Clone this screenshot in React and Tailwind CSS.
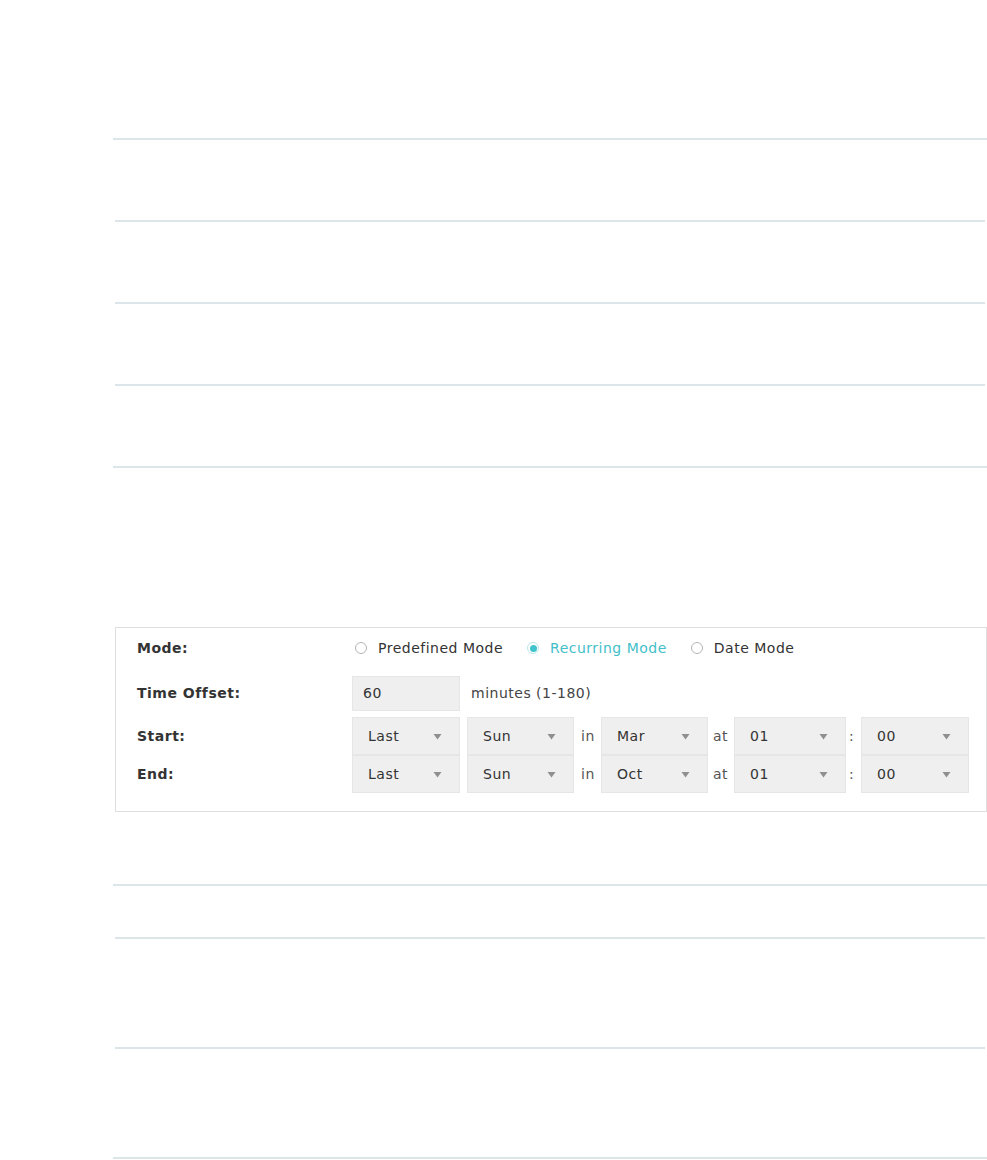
const font = { fontFamily: '"DejaVu Sans", Verdana, sans-serif' };

function Rule({ className = '' }) {
  return <div className={`h-[2px] bg-[#dce6e9] ${className}`} />;
}

function Arrow() {
  return (
    <svg width="9" height="7" viewBox="0 0 9 7" className="shrink-0">
      <path d="M0.5 1 L8.5 1 L4.5 6.5 Z" fill="#8f8f8f" />
    </svg>
  );
}

function Select({ value, w }) {
  return (
    <div
      className={`flex h-[38px] items-center justify-between border border-[#e6e6e6] bg-[#efefef] pl-[15px] pr-[17px] text-[#333] ${w}`}
    >
      <span>{value}</span>
      <Arrow />
    </div>
  );
}

function Radio({ checked, label }) {
  return (
    <label className="flex items-center gap-[11px]">
      {checked ? (
        <span className="flex h-[12px] w-[12px] items-center justify-center rounded-full border border-[#b9e7ea] bg-white">
          <span className="h-[7px] w-[7px] rounded-full bg-[#3fc3cc]" />
        </span>
      ) : (
        <span className="h-[12px] w-[12px] rounded-full border border-[#b5b5b5] bg-white" />
      )}
      <span className={checked ? 'text-[#42bfc9]' : 'text-[#333]'}>{label}</span>
    </label>
  );
}

function TimeRow({ label, a, b, c, d, e }) {
  return (
    <div className="flex items-center">
      <div className="w-[215px] font-bold text-[#333]">{label}</div>
      <div className="flex items-center">
        <Select value={a} w="w-[108px]" />
        <div className="w-[7px]" />
        <Select value={b} w="w-[107px]" />
        <span className="w-[27px] pl-[7px] text-[#555]">in</span>
        <Select value={c} w="w-[107px]" />
        <span className="w-[26px] pl-[5px] text-[#555]">at</span>
        <Select value={d} w="w-[112px]" />
        <span className="w-[15px] pl-[3px] text-[#555]">:</span>
        <Select value={e} w="w-[108px]" />
      </div>
    </div>
  );
}

export default function App() {
  return (
    <div className="min-h-[1160px] bg-white pt-[138px] text-[14px] tracking-[0.5px]" style={font}>
      <div className="pl-[113px]">
        <Rule />
        <div className="h-[80px]" />
        <Rule className="ml-[2px] mr-[2px]" />
        <div className="h-[80px]" />
        <Rule className="ml-[2px] mr-[2px]" />
        <div className="h-[80px]" />
        <Rule className="ml-[2px] mr-[2px]" />
        <div className="h-[80px]" />
        <Rule />

        <div className="h-[159px]" />

        <div className="ml-[2px] border border-[#dedede] pb-[18px] pl-[21px] pt-[9px]">
          <div className="flex h-[22px] items-center">
            <div className="w-[218px] font-bold text-[#333]">Mode:</div>
            <div className="flex items-center gap-[24px]">
              <Radio label="Predefined Mode" />
              <Radio checked label="Recurring Mode" />
              <Radio label="Date Mode" />
            </div>
          </div>

          <div className="mt-[17px] flex items-center">
            <div className="w-[215px] font-bold text-[#333]">Time Offset:</div>
            <div className="flex h-[35px] w-[108px] items-center border border-[#e6e6e6] bg-[#efefef] pl-[10px] text-[#333]">
              60
            </div>
            <span className="pl-[11px] text-[#444]">minutes (1-180)</span>
          </div>

          <div className="mt-[6px]">
            <TimeRow label="Start:" a="Last" b="Sun" c="Mar" d="01" e="00" />
            <TimeRow label="End:" a="Last" b="Sun" c="Oct" d="01" e="00" />
          </div>
        </div>

        <div className="h-[72px]" />
        <Rule />
        <div className="h-[51px]" />
        <Rule className="ml-[2px] mr-[2px]" />
        <div className="h-[108px]" />
        <Rule className="ml-[2px] mr-[2px]" />
        <div className="h-[108px]" />
        <Rule />
      </div>
    </div>
  );
}
